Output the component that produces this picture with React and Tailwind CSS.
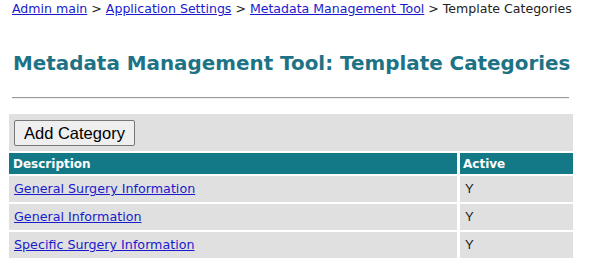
const rows = [
  { name: "General Surgery Information", active: "Y" },
  { name: "General Information", active: "Y" },
  { name: "Specific Surgery Information", active: "Y" },
];

export default function App() {
  return (
    <div className="w-[589px] h-[269px] bg-white font-['Verdana','DejaVu_Sans',sans-serif] text-[13px] text-[#222]">
      {/* Breadcrumb */}
      <div className="pl-[12px] pt-[1px] leading-[16px] whitespace-nowrap text-[12.55px]">
        <a href="#" className="text-[#1a1acc] underline">Admin main</a>
        <span> &gt; </span>
        <a href="#" className="text-[#1a1acc] underline">Application Settings</a>
        <span> &gt; </span>
        <a href="#" className="text-[#1a1acc] underline">Metadata Management Tool</a>
        <span> &gt; Template Categories</span>
      </div>

      {/* Title */}
      <h1 className="pl-[13px] mt-[35px] text-[19.9px] leading-[24px] font-bold text-[#1d7385] whitespace-nowrap">
        Metadata Management Tool: Template Categories
      </h1>

      <div className="ml-[12px] mt-[21px] w-[557px] h-[2px] border-t border-[#999] border-b border-b-[#eee]" />

      {/* Table */}
      <div className="ml-[9px] mt-[15px] w-[564px] flex flex-col gap-[2px]">
        <div className="h-[37px] bg-[#e0e0e0] flex items-center pl-[5px] pt-[1px]">
          <button className="h-[26px] px-[9px] bg-[#efefef] border border-[#767676] rounded-[2px] font-['Liberation_Sans',Arial,sans-serif] text-[16.5px] text-black leading-none">
            Add Category
          </button>
        </div>
        <div className="flex gap-[3px] h-[21px] bg-white text-[12px]">
          <div className="w-[448px] bg-[#137987] text-white font-bold pl-[4px] flex items-center">Description</div>
          <div className="flex-1 bg-[#137987] text-white font-bold pl-[3px] flex items-center">Active</div>
        </div>
        {rows.map((r) => (
          <div key={r.name} className="flex gap-[3px] h-[26px]">
            <div className="w-[448px] bg-[#e0e0e0] pl-[5px] flex items-center text-[12.7px]">
              <a href="#" className="text-[#1a1acc] underline">{r.name}</a>
            </div>
            <div className="flex-1 bg-[#e0e0e0] pl-[5px] flex items-center font-['Liberation_Sans',Arial,sans-serif] text-[13px] text-[#222]">
              {r.active}
            </div>
          </div>
        ))}
      </div>
    </div>
  );
}
